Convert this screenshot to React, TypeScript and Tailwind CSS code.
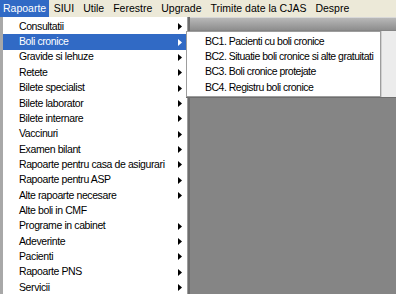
const topMenu = ['Rapoarte', 'SIUI', 'Utile', 'Ferestre', 'Upgrade', 'Trimite date la CJAS', 'Despre'];

const items: { label: string; sub: boolean }[] = [
  { label: 'Consultatii', sub: true },
  { label: 'Boli cronice', sub: true },
  { label: 'Gravide si lehuze', sub: true },
  { label: 'Retete', sub: true },
  { label: 'Bilete specialist', sub: true },
  { label: 'Bilete laborator', sub: true },
  { label: 'Bilete internare', sub: true },
  { label: 'Vaccinuri', sub: true },
  { label: 'Examen bilant', sub: true },
  { label: 'Rapoarte pentru casa de asigurari', sub: true },
  { label: 'Rapoarte pentru ASP', sub: true },
  { label: 'Alte rapoarte necesare', sub: true },
  { label: 'Alte boli in CMF', sub: false },
  { label: 'Programe in cabinet', sub: true },
  { label: 'Adeverinte', sub: true },
  { label: 'Pacienti', sub: true },
  { label: 'Rapoarte PNS', sub: true },
  { label: 'Servicii', sub: true },
];

const subItems = [
  'BC1. Pacienti cu boli cronice',
  'BC2. Situatie boli cronice si alte gratuitati',
  'BC3. Boli cronice protejate',
  'BC4. Registru boli cronice',
];

function Arrow({ white }: { white?: boolean }) {
  return (
    <svg width="4" height="7" viewBox="0 0 4 7" className="shrink-0">
      <path d="M0 0 L4 3.5 L0 7 Z" fill={white ? '#ffffff' : '#000000'} />
    </svg>
  );
}

export default function App() {
  return (
    <div
      className="relative w-[396px] h-[294px] overflow-hidden flex flex-col bg-[#858585] text-[10.5px] text-black"
      style={{ fontFamily: '"Liberation Sans", Arial, sans-serif' }}
    >
      {/* menu bar */}
      <div className="h-[17px] shrink-0 bg-[#ece9d8] flex items-stretch">
        {topMenu.map((m, i) => (
          <div
            key={m}
            className={
              i === 0
                ? 'px-[3px] flex items-center bg-[#316ac5] text-white'
                : 'px-[4.5px] flex items-center'
            }
          >
            {m}
          </div>
        ))}
      </div>

      {/* toolbar band */}
      <div className="h-[13px] shrink-0 bg-gradient-to-b from-[#b8b8b8] to-[#8e8e8e] border-t border-[#d8d8d8]" />

      {/* mdi client */}
      <div className="flex-1 bg-[#858585]" />

      {/* main dropdown */}
      <div className="absolute left-0 top-[17px] w-[188px] bg-white border-l-[3px] border-[#a8a8a8] border-r border-r-[#9d9d9d] pt-[2px] shadow-[2px_0_0_#6e6e6e] tracking-[-0.4px]">
        {items.map((it, i) => (
          <div
            key={it.label}
            className={
              'h-[15.35px] flex items-center justify-between pl-[16px] pr-[5px] whitespace-nowrap ' +
              (i === 1 ? 'bg-[#316ac5] text-white' : '')
            }
          >
            <span>{it.label}</span>
            {it.sub && <Arrow white={i === 1} />}
          </div>
        ))}
      </div>

      {/* submenu */}
      <div className="absolute left-[186px] top-[31px] w-[210px] h-[67px] bg-[#ececec] border-b border-[#6e6e6e]">
        <div className="w-[195px] h-full bg-white border border-[#9d9d9d] py-[2px] shadow-[1px_0_0_#d0d0d0] tracking-[-0.5px]">
          {subItems.map((s) => (
            <div key={s} className="h-[15.35px] flex items-center pl-[18px] whitespace-nowrap">
              {s}
            </div>
          ))}
        </div>
      </div>
    </div>
  );
}
